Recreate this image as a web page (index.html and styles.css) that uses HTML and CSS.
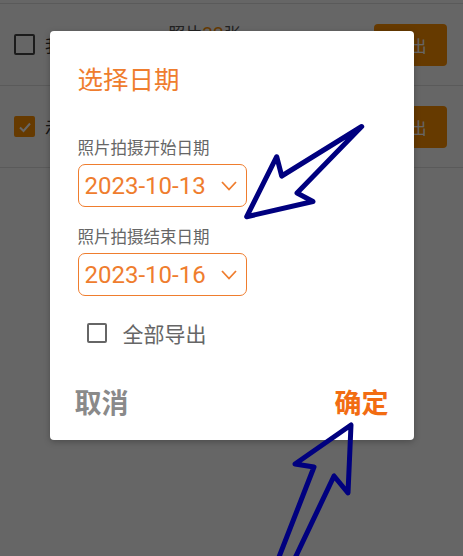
FILE: index.html
```html
<!DOCTYPE html>
<html lang="zh-CN">
<head>
    <meta charset="UTF-8">
    <meta name="viewport" content="width=device-width, initial-scale=1.0">
    <title>选择日期</title>
    <link rel="stylesheet" href="styles.css">
</head>
<body>
    <div class="page">
        <div class="top-strip"></div>
        <div class="row">
            <span class="box"></span>
            <span class="name">我的相册</span>
            <p class="count">照片<b>32</b>张</p>
            <button class="export">导出</button>
        </div>
        <div class="row">
            <span class="box checked">
                <svg width="14" height="14" viewBox="0 0 14 14"><path d="M2 7.5 L5.5 11 L12 3.5" fill="none" stroke="#fff" stroke-width="2"/></svg>
            </span>
            <span class="name">示例相册</span>
            <p class="count"></p>
            <button class="export">导出</button>
        </div>
    </div>

    <div class="mask">
        <div class="dialog">
            <h2 class="title">选择日期</h2>

            <p class="label first">照片拍摄开始日期</p>
            <div class="picker">
                <span>2023-10-13</span>
                <svg width="18" height="12" viewBox="0 0 18 12"><path d="M2 2 L9 9.5 L16 2" fill="none" stroke="#ef7d2e" stroke-width="1.8"/></svg>
            </div>

            <p class="label">照片拍摄结束日期</p>
            <div class="picker">
                <span>2023-10-16</span>
                <svg width="18" height="12" viewBox="0 0 18 12"><path d="M2 2 L9 9.5 L16 2" fill="none" stroke="#ef7d2e" stroke-width="1.8"/></svg>
            </div>

            <label class="all">
                <span class="tick"></span>
                <span>全部导出</span>
            </label>

            <div class="actions">
                <span class="cancel">取消</span>
                <span class="ok">确定</span>
            </div>
        </div>
    </div>

    <svg class="marks" width="463" height="556" viewBox="0 0 463 556">
        <polygon points="361.7,126.5 281.7,176 276.7,156.7 246.7,216.7 313,201.5 297,193" />
        <polygon points="272,575 314,467 295,464 351,425 348,493 334,476 287,575" />
    </svg>
</body>
</html>
```

FILE: styles.css
```css
* {
    box-sizing: border-box;
}
body {
    margin: 0;
    width: 463px;
    height: 556px;
    overflow: hidden;
    background: #fff;
    font-family: "Noto Sans CJK SC", sans-serif;
    position: relative;
}
p {
    margin: 0;
}
.top-strip {
    height: 4px;
    border-bottom: 1px solid #e2e2e2;
}
.row {
    height: 82px;
    display: flex;
    align-items: center;
    padding: 0 16px 0 14px;
    border-bottom: 1px solid #e2e2e2;
}
.box {
    width: 21px;
    height: 21px;
    border: 2px solid #444;
    border-radius: 2px;
    display: flex;
    align-items: center;
    justify-content: center;
}
.box.checked {
    background: #ff9100;
    border-color: #ff9100;
}
.name {
    margin-left: 10px;
    font-size: 17px;
    color: #333;
}
.count {
    flex: 1;
    align-self: flex-start;
    margin: 17px 78px 0 0;
    text-align: center;
    font-size: 17px;
    line-height: 24px;
    color: #555;
}
.count b {
    font-family: Roboto, sans-serif;
    font-size: 19px;
    font-weight: normal;
    color: #ff9100;
}
.export {
    width: 73px;
    height: 42px;
    border: none;
    border-radius: 4px;
    background: #ff9100;
    color: #fff;
    font-family: "Noto Sans CJK SC", sans-serif;
    font-size: 16px;
}
.mask {
    position: absolute;
    inset: 0;
    background: rgba(0, 0, 0, 0.6);
    display: flex;
    justify-content: center;
    align-items: flex-start;
    padding-top: 31px;
}
.dialog {
    width: 364px;
    height: 409px;
    background: #fff;
    border-radius: 4px;
    padding: 0 25px 0 28px;
    box-shadow: 0 2px 6px rgba(0, 0, 0, 0.25);
}
.title {
    margin: 30px 0 0;
    font-size: 25.5px;
    line-height: 34px;
    font-weight: normal;
    color: #ef7d2e;
}
.label {
    margin-top: 19px;
    font-size: 16.5px;
    line-height: 20px;
    color: #666;
}
.label.first {
    margin-top: 42px;
}
.picker {
    width: 169px;
    height: 43px;
    margin-top: 7px;
    border: 1.5px solid #ef7d2e;
    border-radius: 7px;
    display: flex;
    align-items: center;
    justify-content: space-between;
    padding: 0 8px 0 6px;
    font-family: Roboto, sans-serif;
    font-size: 24px;
    color: #ef7d2e;
}
.picker svg {
    margin-top: 1px;
}
.all {
    display: flex;
    align-items: center;
    gap: 16px;
    margin: 27px 0 0 9px;
    height: 20px;
    font-size: 21px;
    color: #666;
}
.tick {
    width: 20px;
    height: 20px;
    border: 2px solid #666;
    border-radius: 2px;
}
.actions {
    display: flex;
    justify-content: space-between;
    margin: 43px 0 0 -3px;
    font-size: 27px;
    line-height: 32px;
    font-weight: bold;
}
.cancel {
    color: #8a8a8a;
}
.ok {
    color: #f26c12;
}
.marks {
    position: absolute;
    left: 0;
    top: 0;
}
.marks polygon {
    fill: none;
    stroke: #00007f;
    stroke-width: 5;
    stroke-linejoin: round;
}
```
